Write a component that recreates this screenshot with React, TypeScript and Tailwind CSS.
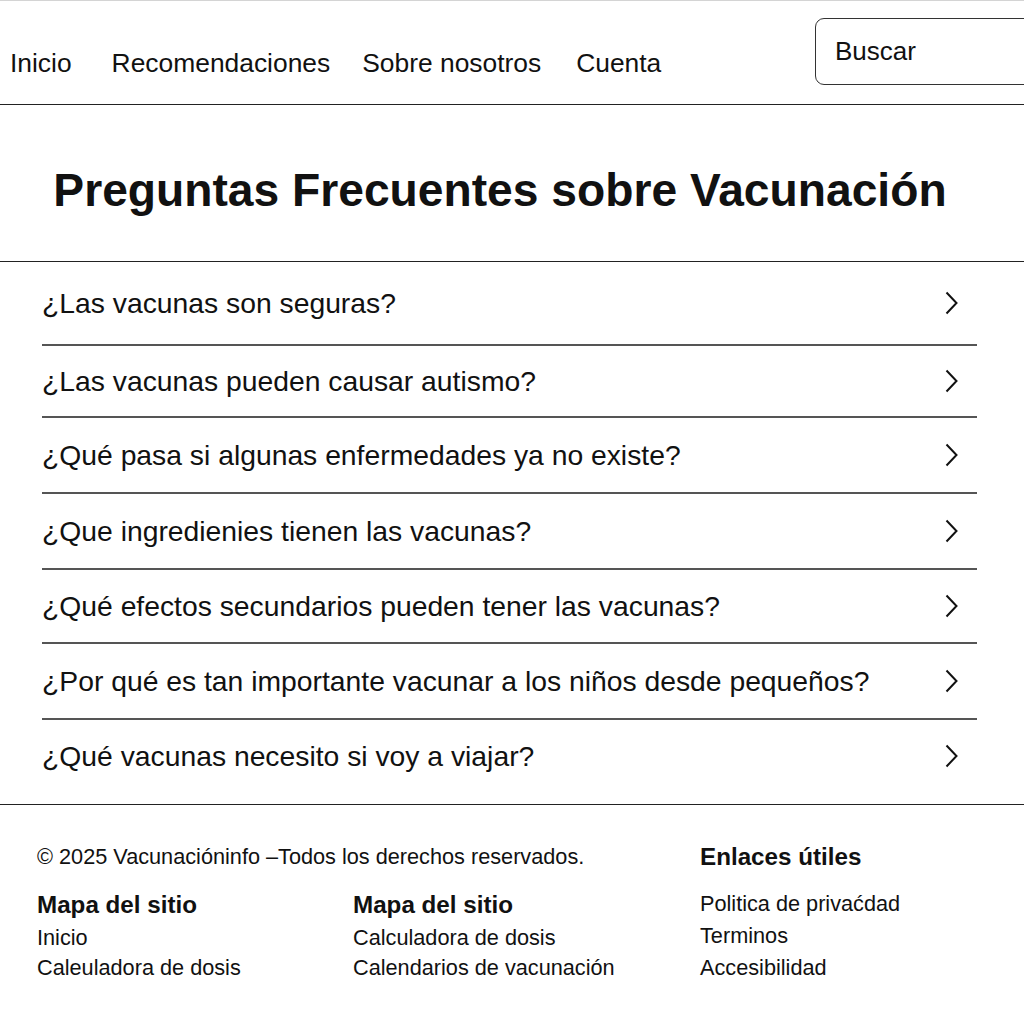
const navItems = [
  { label: "Inicio", gap: "" },
  { label: "Recomendaciones", gap: "ml-[40px]" },
  { label: "Sobre nosotros", gap: "ml-[32px]" },
  { label: "Cuenta", gap: "ml-[35px]" },
];

const questions = [
  { q: "¿Las vacunas son seguras?", h: "h-[84px]" },
  { q: "¿Las vacunas pueden causar autismo?", h: "h-[72px]" },
  { q: "¿Qué pasa si algunas enfermedades ya no existe?", h: "h-[76px]" },
  { q: "¿Que ingredienies tienen las vacunas?", h: "h-[76px]" },
  { q: "¿Qué efectos secundarios pueden tener las vacunas?", h: "h-[74px]" },
  { q: "¿Por qué es tan importante vacunar a los niños desde pequeños?", h: "h-[76px]" },
  { q: "¿Qué vacunas necesito si voy a viajar?", h: "h-[72px]" },
];

function Chevron() {
  return (
    <svg width="13" height="24" viewBox="0 0 13 24" fill="none" className="shrink-0">
      <polyline points="1.5,1.5 11.5,12 1.5,22.5" stroke="#111" strokeWidth="2" strokeLinejoin="miter" />
    </svg>
  );
}

export default function App() {
  return (
    <div className="w-[1024px] h-[1024px] overflow-hidden bg-white text-[#111] font-['Liberation_Sans',Arial,sans-serif]">
      {/* Header */}
      <header className="h-[105px] border-t border-t-[#d4d4d4] border-b border-b-[#222] flex justify-between overflow-hidden">
        <nav className="flex pl-[10px] pt-[44px] text-[26.4px] leading-[36px]">
          {navItems.map((item) => (
            <a key={item.label} className={"whitespace-nowrap " + item.gap}>{item.label}</a>
          ))}
        </nav>
        <div className="mt-[17px] h-[67px] w-[240px] -mr-[31px] shrink-0 border-[1.5px] border-[#333] rounded-[9px] flex items-center pl-[19px] text-[26px]">
          Buscar
        </div>
      </header>

      {/* Title */}
      <section className="h-[157px] border-b border-[#222] flex items-center justify-center pr-[24px] pt-[14px]">
        <h1 className="text-[46.2px] font-bold leading-none">Preguntas Frecuentes sobre Vacunación</h1>
      </section>

      {/* FAQ list */}
      <section className="h-[543px] border-b border-[#222] pl-[42px] pr-[47px]">
        {questions.map((item, i) => (
          <div
            key={item.q}
            className={
              item.h +
              " flex items-center justify-between pr-[19px] text-[28.3px] " +
              (i < questions.length - 1 ? "border-b-2 border-[#555]" : "")
            }
          >
            <span className="whitespace-nowrap">{item.q}</span>
            <Chevron />
          </div>
        ))}
      </section>

      {/* Footer */}
      <footer className="flex pt-[37px] text-[21.7px] leading-[30px]">
        <div className="w-[663px] pl-[37px]">
          <p className="whitespace-nowrap">© 2025 Vacunacióninfo –Todos los derechos reservados.</p>
          <div className="grid grid-cols-[316px_1fr] mt-[18px]">
            <div>
              <h3 className="text-[24.2px] font-bold leading-[30px] mb-[3px]">Mapa del sitio</h3>
              <p>Inicio</p>
              <p>Caleuladora de dosis</p>
            </div>
            <div>
              <h3 className="text-[24.2px] font-bold leading-[30px] mb-[3px]">Mapa del sitio</h3>
              <p>Calculadora de dosis</p>
              <p>Calendarios de vacunación</p>
            </div>
          </div>
        </div>
        <div className="pl-[37px]">
          <h3 className="text-[24.2px] font-bold leading-[30px]">Enlaces útiles</h3>
          <ul className="mt-[16px] leading-[32px]">
            <li>Politica de privaćdad</li>
            <li>Terminos</li>
            <li>Accesibilidad</li>
          </ul>
        </div>
      </footer>
    </div>
  );
}
